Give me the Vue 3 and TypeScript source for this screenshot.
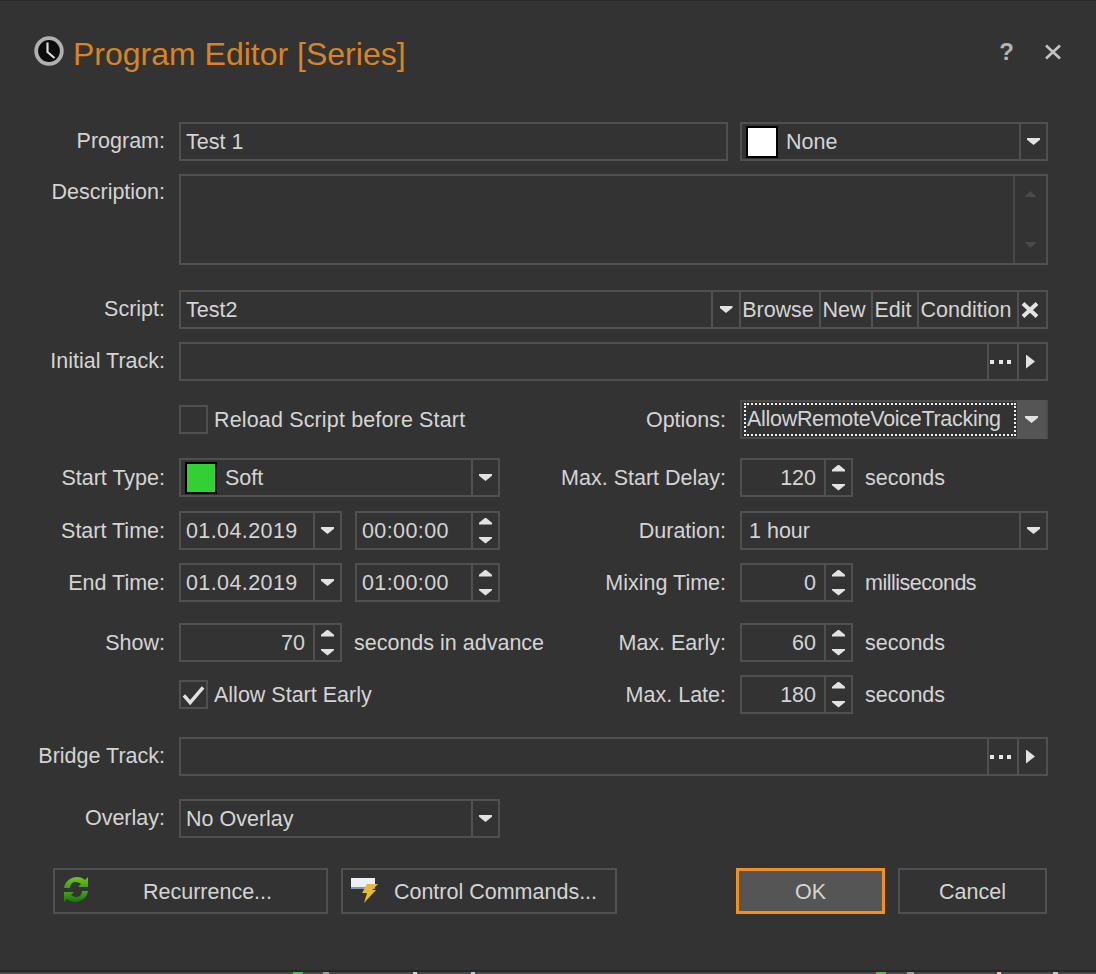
<script setup lang="ts">
const bottomBits = [
  { left: 293, width: 10, color: '#3ac83a' },
  { left: 323, width: 6, color: '#999999' },
  { left: 413, width: 4, color: '#cfcfcf' },
  { left: 471, width: 4, color: '#b8c4d4' },
  { left: 876, width: 10, color: '#3ac83a' },
  { left: 907, width: 7, color: '#999999' },
  { left: 997, width: 4, color: '#d8c8a8' },
  { left: 1053, width: 5, color: '#b8c4d4' }
];
</script>

<template>
  <div class="dialog">
    <header class="title-bar">
      <svg class="clock" width="32" height="32" viewBox="0 0 32 32">
        <circle cx="16" cy="16" r="12.8" fill="#0c0c0c" stroke="#b0b0b0" stroke-width="3.8" />
        <path d="M14.500 7.500V17L21.500 23" fill="none" stroke="#dcdcdc" stroke-width="2.200" />
      </svg>
      <h1 class="title">Program Editor [Series]</h1>
      <span class="help">?</span>
      <svg class="close" width="18" height="16" viewBox="0 0 18 16">
        <path d="M2 1.500L16 14.500M16 1.500L2 14.500" stroke="#c4c4c4" stroke-width="2.600" />
      </svg>
    </header>

    <section class="row first">
      <label class="lbl">Program:</label>
      <div class="box program"><span class="txt">Test 1</span></div>
      <div class="box color-select">
        <span class="swatch white"></span>
        <span class="swatch-text">None</span>
        <span class="cell drop"><i class="arr-down"></i></span>
      </div>
    </section>

    <section class="row desc-row">
      <label class="lbl lbl-top">Description:</label>
      <div class="box desc">
        <div class="desc-scroll">
          <i class="scroll-up"></i>
          <i class="scroll-down"></i>
        </div>
      </div>
    </section>

    <section class="row script-row">
      <label class="lbl">Script:</label>
      <div class="box grow">
        <span class="txt grow">Test2</span>
        <span class="cell c-drop"><i class="arr-down"></i></span>
        <span class="cell c-text c-browse">Browse</span>
        <span class="cell c-text c-new">New</span>
        <span class="cell c-text c-edit">Edit</span>
        <span class="cell c-text c-cond">Condition</span>
        <span class="cell c-x">
          <svg width="18" height="16" viewBox="0 0 18 16"><path d="M2 1.500L16 14.500M16 1.500L2 14.500" stroke="#e4e4e4" stroke-width="4" /></svg>
        </span>
      </div>
    </section>

    <section class="row track-row">
      <label class="lbl">Initial Track:</label>
      <div class="box grow">
        <span class="grow"></span>
        <span class="cell c-dots"><i class="dots"></i></span>
        <span class="cell c-play"><i class="arr-right"></i></span>
      </div>
    </section>

    <section class="row reload-row">
      <div class="left">
        <label class="lbl"></label>
        <span class="check"></span>
        <span class="check-text wide">Reload Script before Start</span>
      </div>
      <div class="right">
        <label class="lbl-r">Options:</label>
        <div class="box options">
          <span class="focus"><span>AllowRemoteVoiceTracking</span></span>
          <span class="options-drop"><i class="arr-down"></i></span>
        </div>
      </div>
    </section>

    <section class="row type-row">
      <div class="left">
        <label class="lbl">Start Type:</label>
        <div class="box grow">
          <span class="swatch green"></span>
          <span class="swatch-text grow">Soft</span>
          <span class="cell drop"><i class="arr-down"></i></span>
        </div>
      </div>
      <div class="right">
        <label class="lbl-r">Max. Start Delay:</label>
        <div class="box spin">
          <span class="num grow">120</span>
          <span class="cell stepper"><i class="arr-up"></i><i class="arr-down"></i></span>
        </div>
        <span class="unit">seconds</span>
      </div>
    </section>

    <section class="row time-row">
      <div class="left">
        <label class="lbl">Start Time:</label>
        <div class="box date">
          <span class="txt digits grow">01.04.2019</span>
          <span class="cell drop"><i class="arr-down"></i></span>
        </div>
        <div class="box time">
          <span class="txt digits grow">00:00:00</span>
          <span class="cell stepper"><i class="arr-up"></i><i class="arr-down"></i></span>
        </div>
      </div>
      <div class="right">
        <label class="lbl-r">Duration:</label>
        <div class="box grow">
          <span class="txt-r grow">1 hour</span>
          <span class="cell drop"><i class="arr-down"></i></span>
        </div>
      </div>
    </section>

    <section class="row time-row2">
      <div class="left">
        <label class="lbl">End Time:</label>
        <div class="box date">
          <span class="txt digits grow">01.04.2019</span>
          <span class="cell drop"><i class="arr-down"></i></span>
        </div>
        <div class="box time">
          <span class="txt digits grow">01:00:00</span>
          <span class="cell stepper"><i class="arr-up"></i><i class="arr-down"></i></span>
        </div>
      </div>
      <div class="right">
        <label class="lbl-r">Mixing Time:</label>
        <div class="box spin">
          <span class="num grow">0</span>
          <span class="cell stepper"><i class="arr-up"></i><i class="arr-down"></i></span>
        </div>
        <span class="unit tight">milliseconds</span>
      </div>
    </section>

    <section class="row show-row">
      <div class="left">
        <label class="lbl">Show:</label>
        <div class="box date">
          <span class="num grow">70</span>
          <span class="cell stepper"><i class="arr-up"></i><i class="arr-down"></i></span>
        </div>
        <span class="advance">seconds in advance</span>
      </div>
      <div class="right">
        <label class="lbl-r">Max. Early:</label>
        <div class="box spin">
          <span class="num grow">60</span>
          <span class="cell stepper"><i class="arr-up"></i><i class="arr-down"></i></span>
        </div>
        <span class="unit">seconds</span>
      </div>
    </section>

    <section class="row late-row">
      <div class="left">
        <label class="lbl"></label>
        <span class="check">
          <svg width="26" height="24" viewBox="0 0 26 24"><path d="M3 12.500L9.500 20L23 4" fill="none" stroke="#e2e2e2" stroke-width="3.600" /></svg>
        </span>
        <span class="check-text">Allow Start Early</span>
      </div>
      <div class="right">
        <label class="lbl-r">Max. Late:</label>
        <div class="box spin">
          <span class="num grow">180</span>
          <span class="cell stepper"><i class="arr-up"></i><i class="arr-down"></i></span>
        </div>
        <span class="unit">seconds</span>
      </div>
    </section>

    <section class="row bridge-row">
      <label class="lbl">Bridge Track:</label>
      <div class="box grow">
        <span class="grow"></span>
        <span class="cell c-dots"><i class="dots"></i></span>
        <span class="cell c-play"><i class="arr-right"></i></span>
      </div>
    </section>

    <section class="row overlay-row">
      <label class="lbl">Overlay:</label>
      <div class="box overlay">
        <span class="txt grow">No Overlay</span>
        <span class="cell drop"><i class="arr-down"></i></span>
      </div>
    </section>

    <footer class="actions">
      <button class="btn recurrence">
        <svg class="btn-icon" width="26" height="25" viewBox="0 0 26 25">
          <defs>
            <linearGradient id="rec-top" x1="0" y1="0" x2="0" y2="1">
              <stop offset="0" stop-color="#72c81e" />
              <stop offset="1" stop-color="#3f9c12" />
            </linearGradient>
            <linearGradient id="rec-bot" x1="0" y1="0" x2="0" y2="1">
              <stop offset="0" stop-color="#4aa814" />
              <stop offset="1" stop-color="#15750f" />
            </linearGradient>
          </defs>
          <path d="M1 11C2 4 8 0 14 0C17 0 20 1 22 3L25 0V10H15L18 7C16 5.500 14 5 12 5C9 5 7 8 7 11Z" fill="url(#rec-top)" />
          <path d="M25 14C24 21 18 25 12 25C9 25 6 24 4 22L1 25V15H11L8 18C10 19.500 12 20 14 20C17 20 19 17 19 14Z" fill="url(#rec-bot)" />
        </svg>
        <span>Recurrence...</span>
      </button>
      <button class="btn commands">
        <svg class="btn-icon-sm" width="28" height="26" viewBox="0 0 28 26">
          <rect x="0" y="0" width="24" height="10" fill="#eef0f8" />
          <rect x="0" y="9" width="24" height="2" fill="#8d93a8" />
          <path d="M16 6H27L21 12H25L13 25L16 15H11Z" fill="#e8b934" />
        </svg>
        <span>Control Commands...</span>
      </button>
      <button class="btn ok">OK</button>
      <button class="btn cancel">Cancel</button>
    </footer>

    <div class="under">
      <i v-for="bit in bottomBits" :key="bit.left" class="bit" :style="{ left: bit.left + 'px', width: bit.width + 'px', background: bit.color }"></i>
    </div>
  </div>
</template>

<style scoped>
.dialog {
  position: relative;
  width: 1096px;
  height: 974px;
  box-sizing: border-box;
  overflow: hidden;
  background: #333333;
  border-top: 1px solid #2b2b2b;
  color: #d4d4d4;
  font-family: "Liberation Sans", Arial, sans-serif;
  font-size: 21.5px;
  display: flex;
  flex-direction: column;
}

.title-bar {
  height: 121px;
  flex-shrink: 0;
  box-sizing: border-box;
  padding: 34px 34px 0 33px;
  display: flex;
  align-items: flex-start;
}

.clock {
  flex-shrink: 0;
}

.title {
  margin: -1px 0 0 8px;
  font-size: 32px;
  font-weight: 400;
  line-height: 40px;
  color: #d98420;
  flex: 1;
}

.help {
  font-size: 24px;
  font-weight: 700;
  color: #b4b4b4;
  line-height: 30px;
  margin-top: 2px;
  margin-right: 30px;
}

.close {
  margin-top: 9px;
}

.row {
  display: flex;
  height: 39px;
  flex-shrink: 0;
  padding-right: 48px;
  box-sizing: content-box;
}

.desc-row {
  height: 91px;
  margin-top: 13px;
}

.script-row {
  margin-top: 25px;
}

.track-row,
.time-row2,
.late-row {
  margin-top: 13px;
}

.reload-row,
.type-row {
  margin-top: 19px;
}

.time-row {
  margin-top: 14px;
}

.show-row {
  margin-top: 21px;
}

.bridge-row,
.overlay-row {
  margin-top: 23px;
}

.lbl {
  width: 165px;
  margin-right: 14px;
  flex-shrink: 0;
  text-align: right;
  line-height: 39px;
}

.lbl-top {
  line-height: 36px;
}

.left {
  width: 500px;
  display: flex;
  flex-shrink: 0;
  align-items: center;
}

.right {
  flex: 1;
  display: flex;
  align-items: center;
  min-width: 0;
}

.left .lbl,
.lbl-r,
.unit,
.advance,
.check-text {
  padding-top: 2px;
}

.lbl-r {
  width: 226px;
  margin-right: 14px;
  flex-shrink: 0;
  text-align: right;
  line-height: 39px;
}

.box {
  box-sizing: border-box;
  height: 39px;
  border: 2px solid #505050;
  display: flex;
  align-items: stretch;
  line-height: 36px;
  min-width: 0;
}

.grow {
  flex: 1;
  min-width: 0;
}

.txt {
  padding-left: 5px;
}

.txt-r {
  padding-left: 7px;
}

.digits {
  letter-spacing: 0.4px;
}

.num {
  text-align: right;
  padding-right: 8px;
}

.program {
  width: 549px;
  margin-right: 12px;
}

.color-select {
  flex: 1;
  padding-left: 4px;
  align-items: center;
}

.color-select .swatch-text {
  flex: 1;
}

.swatch {
  width: 32px;
  height: 32px;
  margin-left: 4px;
  align-self: center;
  box-sizing: border-box;
  border: 2px solid #000;
  flex-shrink: 0;
}

.color-select .swatch {
  margin-left: 0;
}

.swatch.white {
  background: #ffffff;
}

.swatch.green {
  background: #31d035;
}

.swatch-text {
  margin-left: 8px;
}

.cell {
  box-sizing: border-box;
  border-left: 2px solid #505050;
  display: flex;
  align-items: center;
  justify-content: center;
  flex-shrink: 0;
  align-self: stretch;
}

.c-text {
  padding-right: 4px;
}

.drop,
.stepper {
  width: 27px;
}

.stepper {
  flex-direction: column;
  gap: 12px;
}

.desc {
  flex: 1;
  height: 91px;
  justify-content: flex-end;
}

.desc-scroll {
  width: 33px;
  border-left: 2px solid #484848;
  display: flex;
  flex-direction: column;
  align-items: center;
  justify-content: space-between;
  padding: 15px 0;
  box-sizing: border-box;
}

.scroll-up,
.scroll-down {
  width: 12px;
  height: 6px;
  background: #4a4a4a;
}

.scroll-up {
  clip-path: polygon(50% 0, 100% 100%, 0 100%);
}

.scroll-down {
  clip-path: polygon(0 0, 100% 0, 50% 100%);
}

.arr-down,
.arr-up {
  display: block;
  flex-shrink: 0;
  width: 13px;
  height: 7px;
  background: #e2e2e2;
}

.arr-down {
  clip-path: polygon(0 0, 100% 0, 100% 25%, 50% 100%, 0 25%);
}

.arr-up {
  clip-path: polygon(50% 0, 100% 75%, 100% 100%, 0 100%, 0 75%);
}

.arr-right {
  display: block;
  width: 9px;
  height: 14px;
  margin-right: 4px;
  background: #e2e2e2;
  clip-path: polygon(0 0, 100% 50%, 0 100%);
}

.dots {
  display: block;
  width: 21px;
  height: 4px;
  margin-right: 5px;
  background: repeating-linear-gradient(90deg, #e8e8e8 0 4px, transparent 4px 8.5px);
}

.c-drop {
  width: 28px;
}

.c-browse {
  width: 80px;
}

.c-new {
  width: 52px;
}

.c-edit {
  width: 46px;
}

.c-cond {
  width: 100px;
}

.c-x {
  width: 29px;
}

.c-x svg {
  margin-right: 5px;
}

.c-dots {
  width: 30px;
}

.c-play {
  width: 29px;
}

.check {
  width: 29px;
  height: 29px;
  box-sizing: border-box;
  border: 2px solid #505050;
  flex-shrink: 0;
  display: flex;
  align-items: center;
  justify-content: center;
}

.check-text {
  margin-left: 6px;
}

.wide {
  letter-spacing: 0.15px;
}

.options {
  flex: 1;
  border-color: #4c4c4c;
  padding: 1px 0 1px 2px;
}

.focus {
  flex: 1;
  min-width: 0;
  box-sizing: border-box;
  border: 2px dotted #f0f0f0;
  line-height: 29px;
  padding-left: 1px;
  letter-spacing: -0.3px;
  white-space: nowrap;
}

.options-drop {
  width: 29px;
  background: #555555;
  margin: -3px 0 -3px 1px;
  display: flex;
  align-items: center;
  justify-content: center;
  flex-shrink: 0;
}

.spin {
  width: 113px;
  flex-shrink: 0;
}

.unit {
  margin-left: 12px;
}

.tight {
  letter-spacing: -0.5px;
}

.date {
  width: 163px;
  flex-shrink: 0;
  margin-right: 13px;
}

.time {
  width: 145px;
  flex-shrink: 0;
}

.advance {
  margin-left: -1px;
  white-space: nowrap;
}

.overlay {
  width: 321px;
}

.actions {
  margin-top: 30px;
  display: flex;
  flex-shrink: 0;
  padding-left: 53px;
}

.btn {
  position: relative;
  box-sizing: border-box;
  height: 46px;
  background: #333333;
  border: 2px solid #505050;
  color: #d4d4d4;
  font: inherit;
  padding: 2px 0 0;
}

.recurrence {
  width: 275px;
  margin-right: 13px;
  padding-left: 34px;
}

.commands {
  width: 276px;
  margin-right: 119px;
  padding-left: 33px;
}

.btn-icon {
  position: absolute;
  left: 8px;
  top: 7px;
}

.btn-icon-sm {
  position: absolute;
  left: 8px;
  top: 8px;
}

.ok {
  width: 149px;
  margin-right: 13px;
  background: #555555;
  border: 3px solid #f0901e;
}

.cancel {
  width: 149px;
}

.under {
  position: absolute;
  left: 0;
  right: 0;
  bottom: 0;
  height: 2px;
  background: #484848;
  border-top: 2px solid #262626;
}

.bit {
  position: absolute;
  top: 0;
  height: 2px;
}
</style>

<style>
html,
body {
  margin: 0;
  background: #333333;
}
</style>
